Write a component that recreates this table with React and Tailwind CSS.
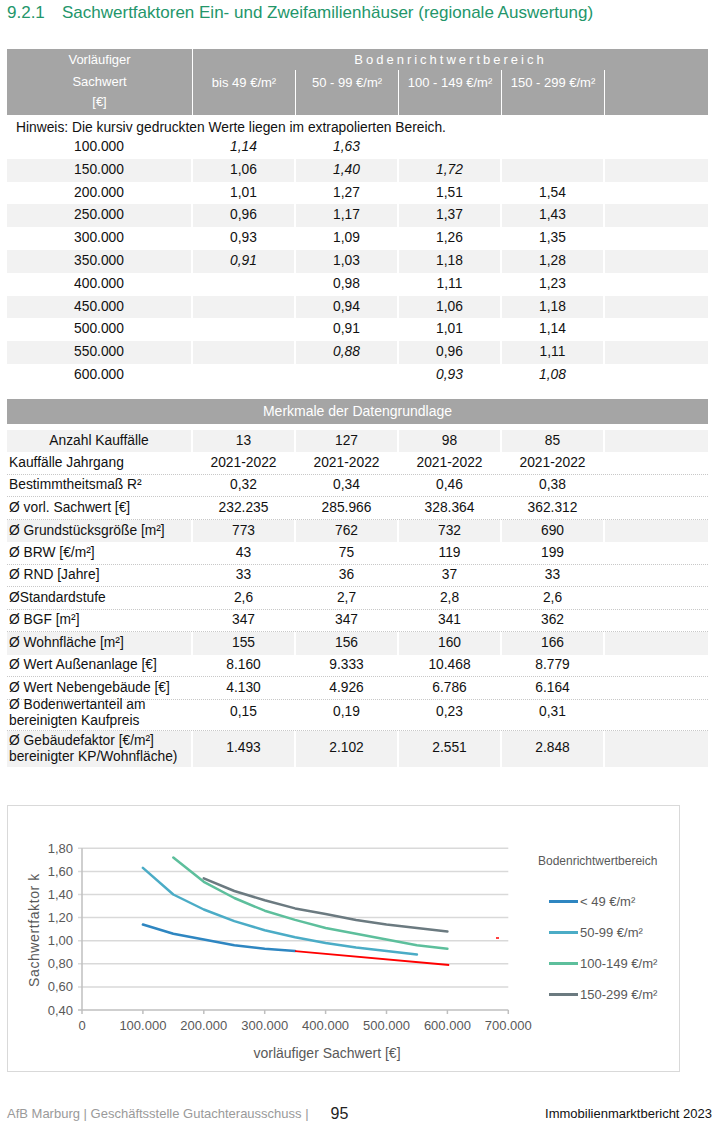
import React from "react";

const FONT = { fontFamily: '"Liberation Sans", Arial, sans-serif' };

const sachwertRows = [
  ["100.000", ["*1,14", "*1,63", "", ""]],
  ["150.000", ["1,06", "*1,40", "*1,72", ""]],
  ["200.000", ["1,01", "1,27", "1,51", "1,54"]],
  ["250.000", ["0,96", "1,17", "1,37", "1,43"]],
  ["300.000", ["0,93", "1,09", "1,26", "1,35"]],
  ["350.000", ["*0,91", "1,03", "1,18", "1,28"]],
  ["400.000", ["", "0,98", "1,11", "1,23"]],
  ["450.000", ["", "0,94", "1,06", "1,18"]],
  ["500.000", ["", "0,91", "1,01", "1,14"]],
  ["550.000", ["", "*0,88", "0,96", "1,11"]],
  ["600.000", ["", "", "*0,93", "*1,08"]],
];

const merkmale = [
  { label: "Anzahl Kauffälle", vals: ["13", "127", "98", "85"], gray: true, center: true },
  { label: "Kauffälle Jahrgang", vals: ["2021-2022", "2021-2022", "2021-2022", "2021-2022"] },
  { label: "Bestimmtheitsmaß R²", vals: ["0,32", "0,34", "0,46", "0,38"] },
  { label: "Ø vorl. Sachwert [€]", vals: ["232.235", "285.966", "328.364", "362.312"] },
  { label: "Ø Grundstücksgröße [m²]", vals: ["773", "762", "732", "690"], gray: true },
  { label: "Ø BRW [€/m²]", vals: ["43", "75", "119", "199"] },
  { label: "Ø RND [Jahre]", vals: ["33", "36", "37", "33"] },
  { label: "ØStandardstufe", vals: ["2,6", "2,7", "2,8", "2,6"] },
  { label: "Ø BGF [m²]", vals: ["347", "347", "341", "362"] },
  { label: "Ø Wohnfläche [m²]", vals: ["155", "156", "160", "166"], gray: true },
  { label: "Ø Wert Außenanlage [€]", vals: ["8.160", "9.333", "10.468", "8.779"] },
  { label: "Ø Wert Nebengebäude [€]", vals: ["4.130", "4.926", "6.786", "6.164"] },
  { label: ["Ø Bodenwertanteil am", "bereinigten Kaufpreis"], vals: ["0,15", "0,19", "0,23", "0,31"], tall: "h-[31px] pb-[4px]" },
  { label: ["Ø Gebäudefaktor [€/m²]", "bereinigter KP/Wohnfläche)"], vals: ["1.493", "2.102", "2.551", "2.848"], gray: true, tall: "h-[36px]" },
];

function Val({ v }) {
  if (!v) return null;
  if (v.startsWith("*")) return <span className="italic">{v.slice(1)}</span>;
  return <span>{v}</span>;
}

function SachwertRow({ label, vals, gray }) {
  const bg = gray ? "bg-[#f2f2f2]" : "";
  return (
    <div className="flex h-[22.8px] text-[13.8px] text-[#111]">
      <div className={`w-[186px] border-r-2 border-white flex items-center justify-center ${bg}`}>{label}</div>
      {vals.map((v, i) => (
        <div key={i} className={`w-[103px] border-r-2 border-white flex items-center justify-center ${bg}`}>
          <Val v={v} />
        </div>
      ))}
      <div className={`w-[103px] ${bg}`} />
    </div>
  );
}

function MerkmalRow({ row }) {
  const bg = row.gray ? "bg-[#f2f2f2]" : "";
  const h = row.tall || "h-[22.5px]";
  const line = row.gray ? "" : "border-b border-dotted border-[#c8c8c8]";
  return (
    <div className={`flex ${h} text-[13.8px] text-[#111] ${line}`}>
      <div
        className={`w-[186px] border-r-2 border-white flex items-center ${bg} ${
          row.center ? "justify-center" : "pl-[2px]"
        }`}
      >
        {Array.isArray(row.label) ? (
          <div className="leading-[16px]">
            <div>{row.label[0]}</div>
            <div>{row.label[1]}</div>
          </div>
        ) : (
          row.label
        )}
      </div>
      {row.vals.map((v, i) => (
        <div key={i} className={`w-[103px] border-r-2 border-white flex items-center justify-center ${bg}`}>
          {v}
        </div>
      ))}
      <div className={`w-[103px] ${bg}`} />
    </div>
  );
}

const X0 = 74;
const XS = 60.9;
const px = (v) => X0 + (v / 100) * XS;
const py = (k) => 204 - (k - 0.4) * 115.5;
const pts = (arr) => arr.map(([v, k]) => `${px(v).toFixed(1)},${py(k).toFixed(1)}`).join(" ");

const series = [
  {
    color: "#2e86c1",
    name: "< 49 €/m²",
    data: [[100, 1.14], [150, 1.06], [200, 1.01], [250, 0.96], [300, 0.93], [350, 0.91]],
  },
  {
    color: "#4bacc6",
    name: "50-99 €/m²",
    data: [[100, 1.63], [150, 1.4], [200, 1.27], [250, 1.17], [300, 1.09], [350, 1.03], [400, 0.98], [450, 0.94], [500, 0.91], [550, 0.88]],
  },
  {
    color: "#5dbf9c",
    name: "100-149 €/m²",
    data: [[150, 1.72], [200, 1.51], [250, 1.37], [300, 1.26], [350, 1.18], [400, 1.11], [450, 1.06], [500, 1.01], [550, 0.96], [600, 0.93]],
  },
  {
    color: "#6b7a80",
    name: "150-299 €/m²",
    data: [[200, 1.54], [250, 1.43], [300, 1.35], [350, 1.28], [400, 1.23], [450, 1.18], [500, 1.14], [550, 1.11], [600, 1.08]],
  },
];

function Chart() {
  const yTicks = [1.8, 1.6, 1.4, 1.2, 1.0, 0.8, 0.6, 0.4];
  const xTicks = [0, 100, 200, 300, 400, 500, 600, 700];
  return (
    <svg width="530" height="265" viewBox="0 0 530 265" style={FONT}>
      {yTicks.map((k) => (
        <g key={k}>
          <line x1={X0 - 4} x2={px(700)} y1={py(k)} y2={py(k)} stroke={k === 0.4 ? "#bfbfbf" : "#d9d9d9"} strokeWidth="1.5" />
          <text x={X0 - 9} y={py(k) + 4.5} textAnchor="end" fontSize="13" fill="#595959">
            {k.toFixed(2).replace(".", ",")}
          </text>
        </g>
      ))}
      <line x1={X0} x2={X0} y1={py(1.8)} y2={py(0.4)} stroke="#bfbfbf" strokeWidth="1.5" />
      {xTicks.map((v) => (
        <g key={v}>
          <line x1={px(v)} x2={px(v)} y1={py(0.4)} y2={py(0.4) + 4} stroke="#bfbfbf" strokeWidth="1.5" />
          <text x={px(v)} y={224} textAnchor="middle" fontSize="13" fill="#595959">
            {v === 0 ? "0" : `${v}.000`}
          </text>
        </g>
      ))}
      {series.map((s) => (
        <polyline key={s.name} points={pts(s.data)} fill="none" stroke={s.color} strokeWidth="2.5" strokeLinejoin="round" strokeLinecap="round" />
      ))}
      <polyline points={pts([[350, 0.91], [603, 0.79]])} fill="none" stroke="#ff0000" strokeWidth="1.8" />
      <line x1="488" x2="491" y1="132" y2="132" stroke="#ff0000" strokeWidth="1.5" />
      <text x="319" y="252" textAnchor="middle" fontSize="14" fill="#595959">
        vorläufiger Sachwert [€]
      </text>
      <text x="27" y="124" textAnchor="middle" fontSize="14" fill="#595959" letterSpacing="0.6" transform="rotate(-90 27 124)" dominantBaseline="middle">
        Sachwertfaktor k
      </text>
    </svg>
  );
}

export default function App() {
  return (
    <div className="w-[719px] h-[1125px] bg-white text-black" style={FONT}>
      <div className="h-[49px] pt-[3px] pl-[7px] flex text-[17px] leading-[20px] text-[#23966a]">
        <span className="w-[55px]">9.2.1</span>
        <span>Sachwertfaktoren Ein- und Zweifamilienhäuser (regionale Auswertung)</span>
      </div>

      <div className="ml-[7px] w-[701px]">
        <div className="flex h-[66px] bg-[#a5a5a5] text-white text-[13px]">
          <div className="w-[186px] border-r border-white flex flex-col items-center">
            <div className="h-[21px] flex items-center pt-[1px]">Vorläufiger</div>
            <div className="h-[24px] flex items-center">Sachwert</div>
            <div className="h-[16px] flex items-center">[€]</div>
          </div>
          <div className="flex-1 flex flex-col">
            <div className="h-[21px] flex items-center justify-center tracking-[3px] pt-[1px]">Bodenrichtwertbereich</div>
            <div className="flex flex-1">
              <div className="w-[103px] border-r border-white flex justify-center pt-[3px]">bis 49 €/m²</div>
              <div className="w-[103px] border-r border-white flex justify-center pt-[3px]">50 - 99 €/m²</div>
              <div className="w-[103px] border-r border-white flex justify-center pt-[3px]">100 - 149 €/m²</div>
              <div className="w-[103px] border-r border-white flex justify-center pt-[3px]">150 - 299 €/m²</div>
              <div className="flex-1" />
            </div>
          </div>
        </div>

        <div className="h-[21px] flex items-end pl-[9px] text-[13.8px] leading-[16px] text-[#111]">
          Hinweis: Die kursiv gedruckten Werte liegen im extrapolierten Bereich.
        </div>

        {sachwertRows.map(([label, vals], i) => (
          <SachwertRow key={label} label={label} vals={vals} gray={i % 2 === 1} />
        ))}

        <div className="mt-[12px] h-[25px] bg-[#a5a5a5] text-white text-[14px] flex items-center justify-center">
          Merkmale der Datengrundlage
        </div>

        <div className="mt-[6px]">
          {merkmale.map((row, i) => (
            <MerkmalRow key={i} row={row} />
          ))}
        </div>
      </div>

      <div className="mt-[38px] ml-[7px] w-[673px] h-[267px] border border-[#d9d9d9] flex">
        <Chart />
        <div className="pt-[47px] text-[#595959]">
          <div className="text-[12px] leading-[16px]">Bodenrichtwertbereich</div>
          <div className="mt-[17px] flex flex-col">
            {series.map((s) => (
              <div key={s.name} className="h-[31px] flex items-center text-[13px]">
                <span className="ml-[11px] w-[29px] h-[3px]" style={{ backgroundColor: s.color }} />
                <span className="ml-[2px]">{s.name}</span>
              </div>
            ))}
          </div>
        </div>
      </div>

      <div className="mt-[30px] px-[7px] flex items-center justify-between">
        <div className="flex items-center">
          <span className="text-[13px] text-[#9a9a9a]">AfB Marburg | Geschäftsstelle Gutachterausschuss |</span>
          <span className="ml-[22px] text-[16px] text-[#222]">95</span>
        </div>
        <span className="text-[13px] text-[#111]">Immobilienmarktbericht 2023</span>
      </div>
    </div>
  );
}
